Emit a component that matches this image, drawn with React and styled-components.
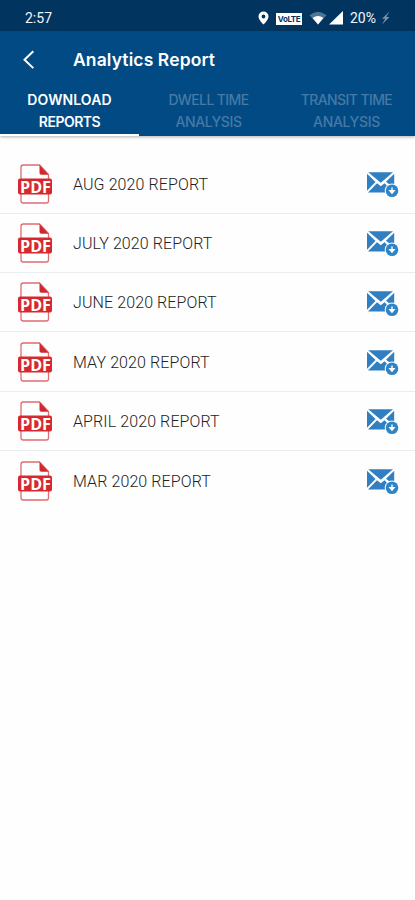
import React from "react";
import styled, { createGlobalStyle } from "styled-components";

const GlobalStyle = createGlobalStyle`
  * { box-sizing: border-box; }
  body { margin: 0; background: #fefefe; font-family: Roboto, sans-serif; }
`;

const Screen = styled.div`
  width: 100%;
  min-height: 900px;
  background: #fefefe;
`;

const StatusBar = styled.div`
  height: 31px;
  padding: 5px 24px 0 25px;
  display: flex;
  align-items: center;
  justify-content: space-between;
  background: #01355f;
  color: #f3f7fa;
`;

const StatusText = styled.span`
  font: 400 14px/20px Roboto, sans-serif;
`;

const StatusIcons = styled.div`
  display: flex;
  align-items: center;
  width: 133px;

  svg { flex: none; display: block; }
`;

const VolteBadge = styled.span`
  width: 26px;
  height: 12px;
  margin: 1px 7px 0 7px;
  background: #fff;
  color: #01355f;
  font: 700 8px/12px Inter, sans-serif;
  letter-spacing: -0.4px;
  text-align: center;
`;

const Header = styled.header`
  height: 105px;
  background: #014a83;
  color: #fff;
  box-shadow: 0 1px 3px rgba(0, 0, 0, 0.3);
`;

const TitleBar = styled.div`
  height: 57px;
  padding-left: 22px;
  display: flex;
  align-items: center;
`;

const BackButton = styled.button`
  width: 51px;
  padding: 0;
  border: 0;
  background: none;
  color: #fff;

  svg { display: block; }
`;

const Title = styled.h1`
  margin: 0;
  font: 600 17.5px/24px Inter, sans-serif;
  letter-spacing: 0.11px;
`;

const Tabs = styled.nav`
  display: grid;
  grid-template-columns: 139px 139px 1fr;
  height: 48px;
`;

const Tab = styled.div`
  display: flex;
  flex-direction: column;
  align-items: center;
  padding-top: 1px;
  border-bottom: 2px solid ${(p) => (p.$active ? "#fff" : "transparent")};
  color: ${(p) => (p.$active ? "#fff" : "#4679a6")};
  font: ${(p) => (p.$active ? 600 : 500)} 14px/22px Inter, sans-serif;
`;

const TabLine = styled.span`
  letter-spacing: ${(p) => p.$spacing};
  white-space: nowrap;
`;

const ReportList = styled.main`
  padding-top: 18.5px;
`;

const ReportRow = styled.div`
  height: 59.3px;
  padding: 0 16px 0 17px;
  display: flex;
  align-items: center;
  border-bottom: ${(p) => (p.$last ? "0" : "1px solid #ebecee")};

  svg { flex: none; display: block; }
`;

const ReportName = styled.span`
  flex: 1;
  padding: 2px 0 0 20px;
  color: #222;
  font: 300 16px/22px Roboto, sans-serif;
  letter-spacing: 0.1px;
`;

const PdfLabel = styled.text`
  font: 700 16.5px "Open Sans", sans-serif;
  fill: #fff;
`;

const PdfIcon = () => (
  <svg width="36" height="40" viewBox="0 0 36 40">
    <path d="M4 14V3.2Q4 1 6.2 1H22.5L31.5 10.5V36.8Q31.5 39 29.3 39H6.2Q4 39 4 36.8Z" fill="#fff" stroke="#df6c70" strokeWidth="1.3" />
    <path d="M22.5 1L31.5 10.8H24.4Q22.5 10.8 22.5 9Z" fill="#cf2930" />
    <rect x="1" y="14.5" width="34" height="16" rx="2" fill="#d6292f" />
    <PdfLabel x="3" y="28.5" textLength="31" lengthAdjust="spacingAndGlyphs">PDF</PdfLabel>
  </svg>
);

const MailIcon = () => (
  <svg width="33" height="31" viewBox="0 -2 33 31">
    <g fill="#2f7fc2">
      <path d="M2.2 2.3H27L14.8 12.8Z" />
      <path d="M1 3.8L9.5 11.9L1 20.8Z" />
      <path d="M28.2 3.8V18L20 11.8Z" />
      <path d="M2 22.6L11 13.3L14.8 16.3L18.6 13.3L27.5 22.6Z" />
    </g>
    <circle cx="26" cy="20.7" r="7.3" fill="#fefefe" />
    <circle cx="26" cy="20.7" r="6.3" fill="#2f84c5" />
    <path d="M26 17.5v4M24 20.8L26 23.2L28 20.8Z" fill="#fff" stroke="#fff" strokeWidth="1.4" />
  </svg>
);

const tabs = [
  { lines: [["DOWNLOAD", "0.1px"], ["REPORTS", "-0.5px"]], active: true },
  { lines: [["DWELL TIME", "-0.6px"], ["ANALYSIS", "-0.4px"]] },
  { lines: [["TRANSIT TIME", "-0.6px"], ["ANALYSIS", "-0.3px"]] },
];

const reports = [
  "AUG 2020 REPORT",
  "JULY 2020 REPORT",
  "JUNE 2020 REPORT",
  "MAY 2020 REPORT",
  "APRIL 2020 REPORT",
  "MAR 2020 REPORT",
];

export default function App() {
  return (
    <Screen>
      <GlobalStyle />
      <StatusBar>
        <StatusText>2:57</StatusText>
        <StatusIcons>
          <svg width="11" height="14" viewBox="0 0 11 14">
            <path fillRule="evenodd" d="M5.5 0.5A5 5 0 0 0 0.5 5.5C0.5 9 5.5 13.5 5.5 13.5S10.5 9 10.5 5.5A5 5 0 0 0 5.5 0.5ZM5.5 3.6A1.9 1.9 0 1 1 5.5 7.4A1.9 1.9 0 0 1 5.5 3.6Z" fill="#fff" />
          </svg>
          <VolteBadge>VoLTE</VolteBadge>
          <svg width="18" height="14" viewBox="0 0 18 14">
            <path d="M0.5 4.2Q9-2.8 17.5 4.2L9 13.5Z" fill="#4d7696" />
            <path d="M3.6 7Q9 2.8 14.4 7L9 13.5Z" fill="#fff" />
          </svg>
          <svg width="23" height="14" viewBox="0 0 23 14">
            <path d="M16 0V13.5H2Z" fill="#fff" />
          </svg>
          <StatusText>20%</StatusText>
          <svg width="15" height="14" viewBox="0 0 15 14">
            <path d="M13.5 0.5L6 7.8H9.2L6 13.5L13.5 6H10.2Z" fill="#7894ab" />
          </svg>
        </StatusIcons>
      </StatusBar>
      <Header>
        <TitleBar>
          <BackButton aria-label="Back">
            <svg width="14" height="20" viewBox="0 0 14 20">
              <path d="M11.3 1.3L2.5 9.7L11.3 18.1" fill="none" stroke="#fff" strokeWidth="2" />
            </svg>
          </BackButton>
          <Title>Analytics Report</Title>
        </TitleBar>
        <Tabs>
          {tabs.map((tab, i) => (
            <Tab key={i} $active={tab.active}>
              {tab.lines.map(([text, spacing]) => (
                <TabLine key={text} $spacing={spacing}>{text}</TabLine>
              ))}
            </Tab>
          ))}
        </Tabs>
      </Header>
      <ReportList>
        {reports.map((name, i) => (
          <ReportRow key={name} $last={i === reports.length - 1}>
            <PdfIcon />
            <ReportName>{name}</ReportName>
            <MailIcon />
          </ReportRow>
        ))}
      </ReportList>
    </Screen>
  );
}
